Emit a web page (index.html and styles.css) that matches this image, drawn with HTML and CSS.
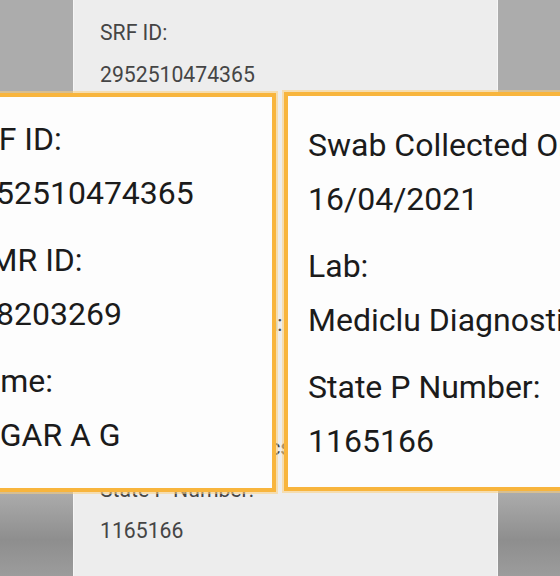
FILE: index.html
```html
<!DOCTYPE html>
<html lang="en">

<head>
  <meta charset="UTF-8">
  <meta name="viewport" content="width=device-width, initial-scale=1.0">
  <title>Test Report</title>
  <link rel="stylesheet" href="styles.css">
</head>

<body>
  <div class="screen">

    <!-- Report card on the phone -->
    <section class="record">
      <div class="field">
        <p class="label">SRF ID:</p>
        <p class="value">2952510474365</p>
      </div>
      <div class="field">
        <p class="label">ICMR ID:</p>
        <p class="value">118203269</p>
      </div>
      <div class="field field-wide">
        <p class="label">Name:</p>
        <p class="value">SAGAR A G</p>
      </div>
      <div class="field">
        <p class="label">Swab Collected On:</p>
        <p class="value">16/04/2021</p>
      </div>
      <div class="field">
        <p class="label">Lab:</p>
        <p class="value">Mediclu Diagnostics</p>
      </div>
      <div class="field">
        <p class="label">State P Number:</p>
        <p class="value">1165166</p>
      </div>
    </section>

    <!-- Zoomed callouts -->
    <div class="zoom zoom-left">
      <div class="field">
        <p class="label">SRF ID:</p>
        <p class="value">2952510474365</p>
      </div>
      <div class="field">
        <p class="label">ICMR ID:</p>
        <p class="value">118203269</p>
      </div>
      <div class="field">
        <p class="label">Name:</p>
        <p class="value">SAGAR A G</p>
      </div>
    </div>

    <div class="zoom zoom-right">
      <div class="field">
        <p class="label">Swab Collected On:</p>
        <p class="value">16/04/2021</p>
      </div>
      <div class="field">
        <p class="label">Lab:</p>
        <p class="value">Mediclu Diagnostics</p>
      </div>
      <div class="field">
        <p class="label">State P Number:</p>
        <p class="value">1165166</p>
      </div>
    </div>

  </div>
</body>
</html>
```

FILE: styles.css
```css
html,
body {
  margin: 0;
  padding: 0;
  height: 576px;
  overflow: hidden;
}

body {
  font-family: Roboto, "Liberation Sans", sans-serif;
  background: linear-gradient(#acacac 0, #acacac 492px, #8e8e8e 540px, #9c9c9c 576px);
}

p {
  margin: 0;
  white-space: nowrap;
}

.screen {
  position: relative;
  height: 576px;
}

/* card behind the callouts */
.record {
  box-sizing: border-box;
  margin-left: 73px;
  width: 425px;
  height: 576px;
  padding: 12px 0 0 26px;
  background-color: #ededed;
  border-left: 1px solid #f6f6f6;
  border-right: 1px solid #f6f6f6;
  color: #454545;
  font-size: 21.2px;
  line-height: 41.5px;
  overflow: hidden;
}

.record .field-wide {
  margin-bottom: 41.5px;
}

/* zoomed boxes */
.zoom {
  position: absolute;
  box-sizing: border-box;
  background-color: #fdfdfd;
  border: 4px solid #f8b53d;
  box-shadow: 0 0 0 2px rgba(252, 208, 125, 0.55);
  color: #1b1b1b;
  font-size: 32px;
  line-height: 54px;
  overflow: hidden;
}

.zoom .field {
  margin-bottom: 13px;
}

.zoom-left {
  left: -60px;
  top: 93px;
  width: 336px;
  height: 399px;
  padding: 15px 0 0 16px;
}

.zoom-right {
  left: 284px;
  top: 92px;
  width: 340px;
  height: 399px;
  padding: 22px 0 0 20px;
}
```
